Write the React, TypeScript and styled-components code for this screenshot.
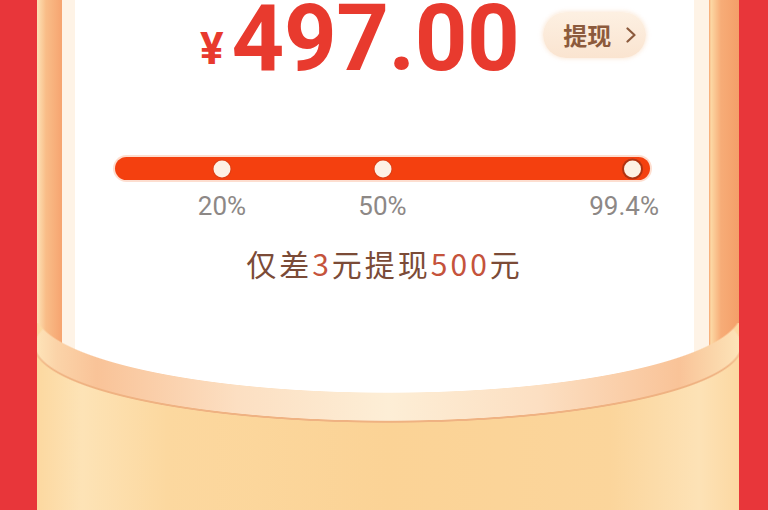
import React from 'react';
import styled, { createGlobalStyle } from 'styled-components';

const GlobalStyle = createGlobalStyle`
  html, body {
    margin: 0;
    padding: 0;
    background: #e8363a;
  }
`;

const Page = styled.div`
  position: relative;
  width: 768px;
  height: 510px;
  box-sizing: border-box;
  padding: 0 29px 0 37px;
  overflow: hidden;
  background: #e8363a;
  font-family: Roboto, 'Noto Sans', sans-serif;
`;

const Frame = styled.div`
  position: relative;
  height: 100%;
  box-sizing: border-box;
  padding: 0 30px 0 25px;
  background: linear-gradient(
    90deg,
    #fde2b6 0,
    #f9bd88 9px,
    #f6a470 25px,
    #f6a470 calc(100% - 30px),
    #fcd8a4 calc(100% - 28px),
    #f7ac77 calc(100% - 18px),
    #f49f69 100%
  );
`;

const Card = styled.div`
  display: flex;
  flex-direction: column;
  height: 100%;
  box-sizing: border-box;
  padding-top: 1px;
  background: #fff;
  border-left: 13px solid #fef3e6;
  border-right: 15px solid #fef3e6;
`;

const PriceRow = styled.div`
  display: flex;
  align-items: flex-start;
  gap: 24px;
  padding-left: 125px;
`;

const Price = styled.div`
  color: #e83a2e;
  font-weight: 700;
  font-size: 92px;
  line-height: 76px;
  letter-spacing: -0.5px;
  white-space: nowrap;
`;

const Yen = styled.span`
  font-size: 44px;
  letter-spacing: 0;
  vertical-align: 6px;
  margin-right: 8px;
`;

const WithdrawButton = styled.button`
  display: flex;
  align-items: center;
  gap: 15px;
  margin-top: 11px;
  width: 103px;
  height: 46px;
  box-sizing: border-box;
  padding: 0 0 0 20px;
  border: 0;
  border-radius: 23px;
  background: linear-gradient(180deg, #fdf0e2, #fae4d0);
  box-shadow: 0 0 5px rgba(248, 214, 182, 0.7);
  color: #8c5a3c;
  font-family: 'Noto Sans CJK SC', sans-serif;
  font-size: 24px;
  font-weight: 700;
  line-height: 1;
`;

const Track = styled.div`
  position: relative;
  height: 23px;
  margin: 70px 44px 0 40px;
  border-radius: 12px;
  background: #f4400f;
  box-shadow: 0 0 0 2px rgba(250, 160, 120, 0.35);
`;

const Dot = styled.span<{ $at?: number; $end?: boolean }>`
  position: absolute;
  top: 50%;
  left: ${({ $at, $end }) => ($end ? 'auto' : `${$at}%`)};
  right: ${({ $end }) => ($end ? '9px' : 'auto')};
  width: 17px;
  height: 17px;
  box-sizing: border-box;
  border-radius: 50%;
  background: #fdf1e4;
  transform: ${({ $end }) => ($end ? 'translateY(-50%)' : 'translate(-50%, -50%)')};
  box-shadow: ${({ $end }) =>
    $end ? '0 0 0 2px rgba(120, 40, 20, 0.55)' : '0 0 0 1px rgba(170, 60, 30, 0.3)'};
`;

const Label = styled.span<{ $at?: number; $end?: boolean }>`
  position: absolute;
  top: calc(100% + 11px);
  left: ${({ $at, $end }) => ($end ? 'auto' : `${$at}%`)};
  right: ${({ $end }) => ($end ? '-9px' : 'auto')};
  transform: ${({ $end }) => ($end ? 'none' : 'translateX(-50%)')};
  color: #8d8886;
  font-size: 26px;
  line-height: 30px;
  white-space: nowrap;
`;

const Message = styled.p`
  margin: 63px 0 0;
  text-align: center;
  color: #7b4b37;
  font-family: 'Noto Sans CJK SC', sans-serif;
  font-size: 30px;
  line-height: 40px;
  letter-spacing: 3px;

  em {
    font-style: normal;
    color: #c5533c;
  }
`;

const Pocket = styled.div`
  position: absolute;
  left: 0;
  right: 0;
  bottom: 0;
  height: 187px;
  background: linear-gradient(
    90deg,
    #fde3b8 0,
    #fbd3a8 20px,
    #f9c398 60px,
    #fcdfc2 200px,
    #fdeed6 50%,
    #fcdfc2 calc(100% - 200px),
    #f9c398 calc(100% - 60px),
    #fbd6aa calc(100% - 25px),
    #fde3b8 100%
  );
  -webkit-mask-image: radial-gradient(ellipse 355px 82px at 50% -12px, transparent 99.2%, #000 100%);
  mask-image: radial-gradient(ellipse 355px 82px at 50% -12px, transparent 99.2%, #000 100%);

  &::before,
  &::after {
    content: '';
    position: absolute;
    inset: 0;
  }

  &::before {
    background: #efb282;
    -webkit-mask-image: radial-gradient(ellipse 355px 77px at 50% 21px, transparent 99.2%, #000 100%);
    mask-image: radial-gradient(ellipse 355px 77px at 50% 21px, transparent 99.2%, #000 100%);
  }

  &::after {
    background: linear-gradient(
      90deg,
      #fcd8a0 0,
      #fde3b6 45px,
      #fcd89f 130px,
      #fbd396 50%,
      #fbd59b calc(100% - 130px),
      #fde2b6 calc(100% - 40px),
      #fcd8a2 100%
    );
    -webkit-mask-image: radial-gradient(ellipse 355px 77px at 50% 23px, transparent 99.2%, #000 100%);
    mask-image: radial-gradient(ellipse 355px 77px at 50% 23px, transparent 99.2%, #000 100%);
  }
`;

const Chevron = () => (
  <svg width='10' height='16' viewBox='0 0 10 16' fill='none'>
    <polyline
      points='1.5,1.5 8.5,8 1.5,14.5'
      stroke='#8c5a3c'
      strokeWidth='2.2'
      strokeLinecap='round'
      strokeLinejoin='round'
    />
  </svg>
);

const milestones = [
  { at: 20, label: '20%' },
  { at: 50, label: '50%' },
];

const App = () => {
  return (
    <>
      <GlobalStyle />
      <Page>
        <Frame>
          <Card>
            <PriceRow>
              <Price>
                <Yen>¥</Yen>497.00
              </Price>
              <WithdrawButton>
                提现
                <Chevron />
              </WithdrawButton>
            </PriceRow>

            <Track>
              {milestones.map((m) => (
                <React.Fragment key={m.label}>
                  <Dot $at={m.at} />
                  <Label $at={m.at}>{m.label}</Label>
                </React.Fragment>
              ))}
              <Dot $end />
              <Label $end>99.4%</Label>
            </Track>

            <Message>
              仅差<em>3</em>元提现<em>500</em>元
            </Message>
          </Card>
          <Pocket />
        </Frame>
      </Page>
    </>
  );
};

export default App;
